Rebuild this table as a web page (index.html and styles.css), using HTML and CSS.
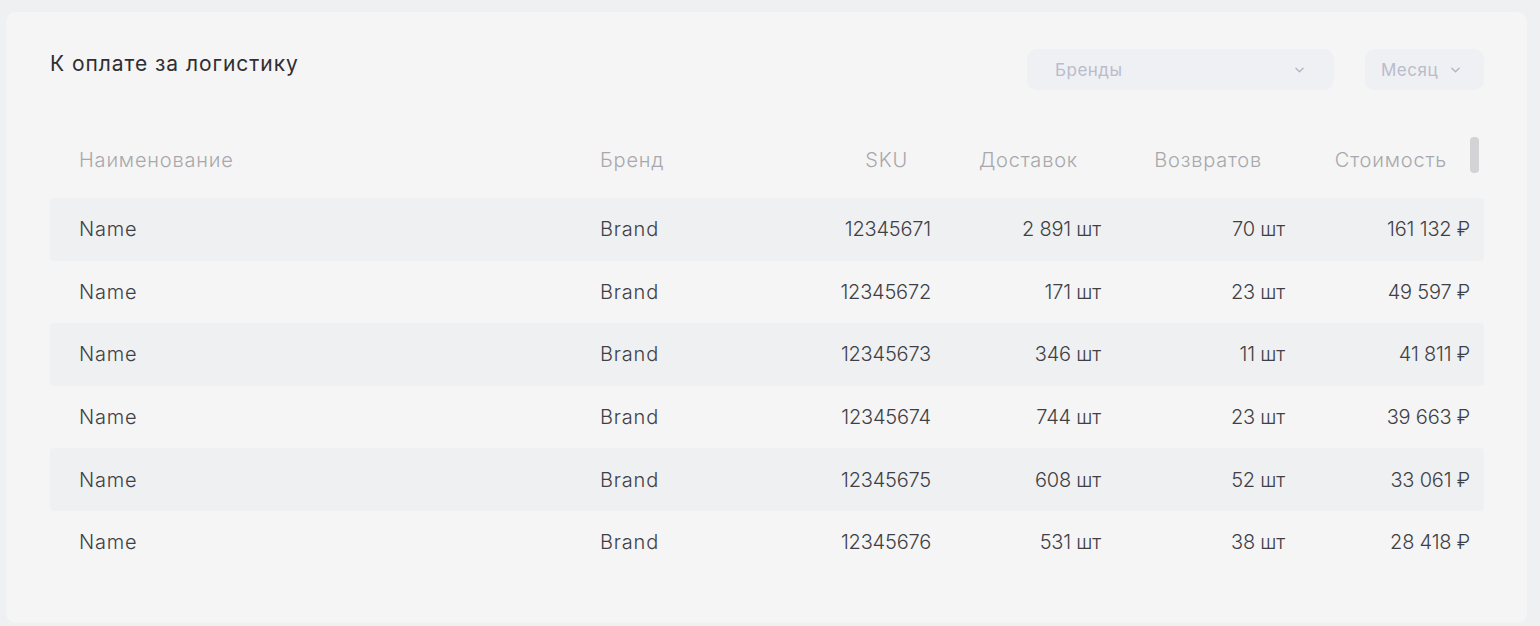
FILE: index.html
```html
<!DOCTYPE html>
<html lang="ru">
<head>
<meta charset="utf-8">
<link rel="stylesheet" href="styles.css">
</head>
<body>
<div class="card">
  <div class="top">
    <h2 class="title">К оплате за логистику</h2>
    <div class="filters">
      <div class="select select-brands"><span>Бренды</span><svg class="chev" viewBox="0 0 10 6" width="9" height="6"><path d="M1 1l4 4 4-4" fill="none" stroke="currentColor" stroke-width="1.4" stroke-linecap="round" stroke-linejoin="round"/></svg></div>
      <div class="select select-month"><span>Месяц</span><svg class="chev" viewBox="0 0 10 6" width="9" height="6"><path d="M1 1l4 4 4-4" fill="none" stroke="currentColor" stroke-width="1.4" stroke-linecap="round" stroke-linejoin="round"/></svg></div>
    </div>
  </div>
  <div class="table">
    <div class="scroll-thumb"></div>
    <div class="row head">
      <div class="c l">Наименование</div>
      <div class="c l">Бренд</div>
      <div class="c r">SKU</div>
      <div class="c r">Доставок</div>
      <div class="c r">Возвратов</div>
      <div class="c r">Стоимость</div>
    </div>
    <div class="row odd">
      <div class="c l">Name</div><div class="c l">Brand</div><div class="c r n">12345671</div><div class="c r n">2 891 шт</div><div class="c r n">70 шт</div><div class="c r n">161 132 ₽</div>
    </div>
    <div class="row">
      <div class="c l">Name</div><div class="c l">Brand</div><div class="c r n">12345672</div><div class="c r n">171 шт</div><div class="c r n">23 шт</div><div class="c r n">49 597 ₽</div>
    </div>
    <div class="row odd">
      <div class="c l">Name</div><div class="c l">Brand</div><div class="c r n">12345673</div><div class="c r n">346 шт</div><div class="c r n">11 шт</div><div class="c r n">41 811 ₽</div>
    </div>
    <div class="row">
      <div class="c l">Name</div><div class="c l">Brand</div><div class="c r n">12345674</div><div class="c r n">744 шт</div><div class="c r n">23 шт</div><div class="c r n">39 663 ₽</div>
    </div>
    <div class="row odd">
      <div class="c l">Name</div><div class="c l">Brand</div><div class="c r n">12345675</div><div class="c r n">608 шт</div><div class="c r n">52 шт</div><div class="c r n">33 061 ₽</div>
    </div>
    <div class="row">
      <div class="c l">Name</div><div class="c l">Brand</div><div class="c r n">12345676</div><div class="c r n">531 шт</div><div class="c r n">38 шт</div><div class="c r n">28 418 ₽</div>
    </div>
  </div>
</div>
</body>
</html>
```

FILE: styles.css
```css
* { box-sizing: border-box; }
html, body { margin: 0; padding: 0; }
body {
  width: 1540px;
  height: 626px;
  background: #eff0f2;
  font-family: "Inter", "Liberation Sans", sans-serif;
  padding: 12px 13px 3px 6px;
  overflow: hidden;
}
.card {
  background: #f5f5f5;
  border-radius: 10px;
  height: 611px;
  padding: 37px 43px 0 44px;
}
.top {
  display: flex;
  justify-content: space-between;
  align-items: flex-start;
  height: 74px;
}
.title {
  margin: 3px 0 0 0;
  font-size: 21px;
  font-weight: 400;
  letter-spacing: 0.95px;
  color: #2e2e33;
  line-height: 24px;
}
.filters {
  display: flex;
  gap: 31px;
}
.select {
  height: 41px;
  background: #eff0f3;
  border-radius: 10px;
  display: flex;
  align-items: center;
  justify-content: space-between;
  color: #b9bccb;
  font-size: 17px;
  font-weight: 400;
  letter-spacing: 0.5px;
}
.select-brands { width: 307px; padding: 0 30px 0 28px; }
.select-month { width: 119px; padding: 0 24px 0 16px; }
.chev { color: #aeb2c2; margin-top: 1px; }
.table {
  position: relative;
}
.scroll-thumb {
  position: absolute;
  right: 5px;
  top: 14px;
  width: 9px;
  height: 36px;
  border-radius: 4px;
  background: #d3d3d5;
}
.row {
  display: grid;
  grid-template-columns: 521px 160px 171px 170px 184px 185px;
  padding: 0 14px 0 29px;
  height: 62.6px;
  align-items: center;
  font-size: 20px;
  font-weight: 300;
  letter-spacing: 0.8px;
  color: #3f4045;
  border-radius: 4px;
}
.row .n { letter-spacing: -0.2px; }
.row.head {
  height: 75px;
  padding-bottom: 1px;
  color: #a8a8ac;
}
.row.head .r { padding-right: 23px; }
.row.odd { background: #eff0f2; }
.c.l { text-align: left; }
.c.r { text-align: right; }
```
